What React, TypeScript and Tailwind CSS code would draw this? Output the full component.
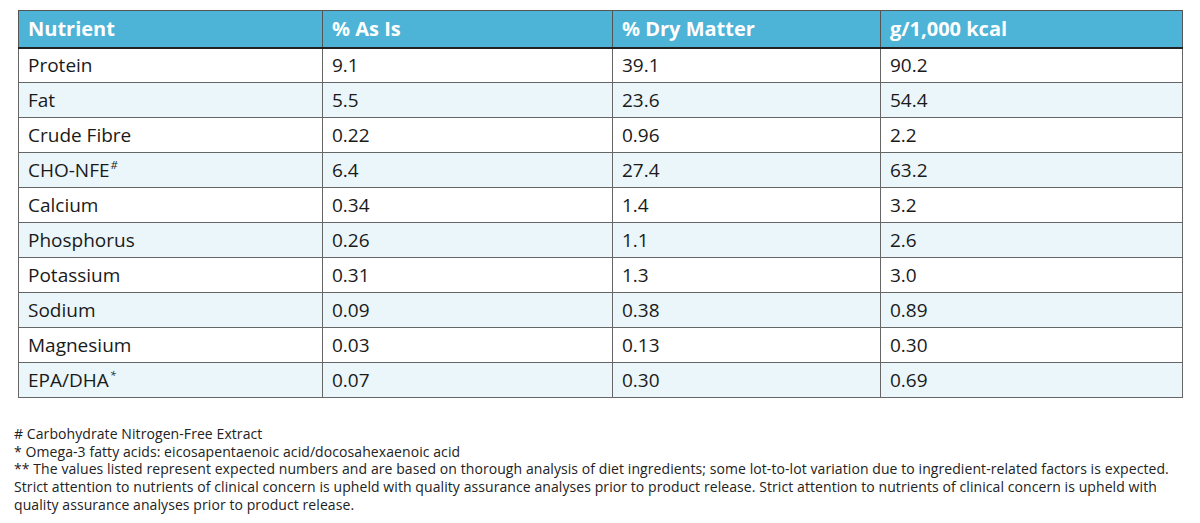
import React from 'react';

const rows = [
  ['Protein', '9.1', '39.1', '90.2'],
  ['Fat', '5.5', '23.6', '54.4'],
  ['Crude Fibre', '0.22', '0.96', '2.2'],
  ['CHO-NFE#', '6.4', '27.4', '63.2'],
  ['Calcium', '0.34', '1.4', '3.2'],
  ['Phosphorus', '0.26', '1.1', '2.6'],
  ['Potassium', '0.31', '1.3', '3.0'],
  ['Sodium', '0.09', '0.38', '0.89'],
  ['Magnesium', '0.03', '0.13', '0.30'],
  ['EPA/DHA*', '0.07', '0.30', '0.69'],
];

const renderName = (name: string) => {
  const mark = name.endsWith('#') || name.endsWith('*') ? name.slice(-1) : '';
  if (!mark) return name;
  return (
    <>
      {name.slice(0, -1)}
      <span className="text-[11px] italic relative top-[-8px] ml-[1px]">{mark}</span>
    </>
  );
};

const App = () => {
  return (
    <div className="bg-white w-[1200px] h-[523px] pt-[10px] font-['Open_Sans',sans-serif] text-[#1a1a1a]">
      <table className="ml-[18px] w-[1164px] border-collapse table-fixed">
        <colgroup>
          <col className="w-[304px]" />
          <col className="w-[290px]" />
          <col className="w-[268px]" />
          <col className="w-[302px]" />
        </colgroup>
        <thead>
          <tr className="bg-[#4db3d7] text-white text-[20px] font-bold h-[37px]">
            {['Nutrient', '% As Is', '% Dry Matter', 'g/1,000 kcal'].map(h => (
              <th
                key={h}
                className="text-left px-[9px] border border-[#555] border-b-2 border-b-[#222] font-bold leading-none"
              >
                {h}
              </th>
            ))}
          </tr>
        </thead>
        <tbody>
          {rows.map((row, i) => (
            <tr key={row[0]} className={`h-[35px] text-[19px] ${i % 2 === 1 ? 'bg-[#eaf6f9]' : 'bg-white'}`}>
              {row.map((cell, j) => (
                <td key={j} className="px-[9px] border border-[#666] leading-none">
                  {j === 0 ? renderName(cell) : cell}
                </td>
              ))}
            </tr>
          ))}
        </tbody>
      </table>

      <div className="mt-[27px] ml-[14px] text-[14px] leading-[17.7px] tracking-[0.08px] text-[#222] whitespace-nowrap">
        <p># Carbohydrate Nitrogen-Free Extract</p>
        <p>* Omega-3 fatty acids: eicosapentaenoic acid/docosahexaenoic acid</p>
        <p>
          ** The values listed represent expected numbers and are based on thorough analysis of diet ingredients; some
          lot-to-lot variation due to ingredient-related factors is expected.
          <br />
          Strict attention to nutrients of clinical concern is upheld with quality assurance analyses prior to product
          release. Strict attention to nutrients of clinical concern is upheld with
          <br />
          quality assurance analyses prior to product release.
        </p>
      </div>
    </div>
  );
};

export default App;
